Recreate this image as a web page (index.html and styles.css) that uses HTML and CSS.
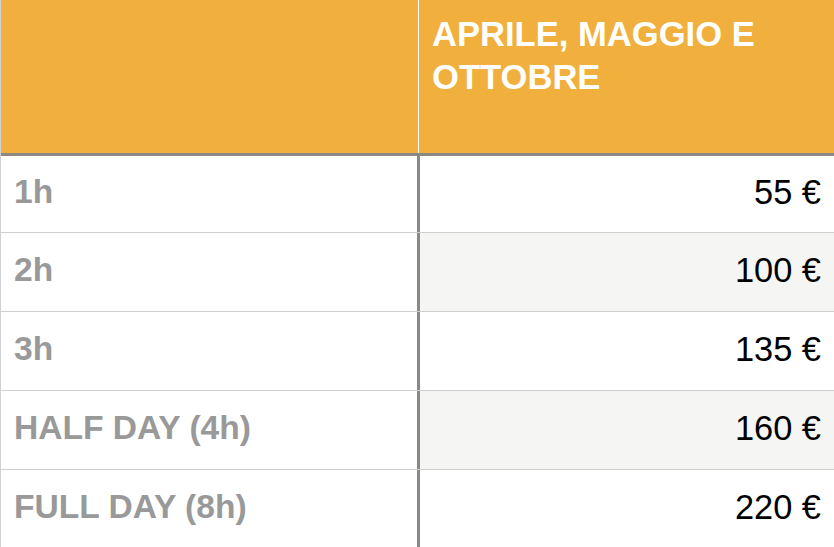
FILE: index.html
```html
<!DOCTYPE html>
<html lang="it">
<head>
<meta charset="utf-8">
<title>Prezzi</title>
<link rel="stylesheet" href="styles.css">
</head>
<body>
<div class="table">
  <div class="head">
    <div class="hcell hcell-left"></div>
    <div class="hcell hcell-right">APRILE, MAGGIO E OTTOBRE</div>
  </div>
  <div class="row row-first">
    <div class="label">1h</div>
    <div class="price">55 €</div>
  </div>
  <div class="row row-alt">
    <div class="label">2h</div>
    <div class="price">100 €</div>
  </div>
  <div class="row">
    <div class="label">3h</div>
    <div class="price">135 €</div>
  </div>
  <div class="row row-alt">
    <div class="label">HALF DAY (4h)</div>
    <div class="price">160 €</div>
  </div>
  <div class="row row-last">
    <div class="label">FULL DAY (8h)</div>
    <div class="price">220 €</div>
  </div>
</div>
</body>
</html>
```
FILE: styles.css
```css
html, body {
  margin: 0;
  padding: 0;
  background: #ffffff;
}

body {
  font-family: "Liberation Sans", Arial, Helvetica, sans-serif;
  width: 834px;
  height: 547px;
  overflow: hidden;
}

.table {
  width: 834px;
  border-left: 1px solid #cfd2d4;
  box-sizing: border-box;
}

.head {
  display: grid;
  grid-template-columns: 417px 1fr;
  height: 153px;
  background: #f1b03e;
  border-bottom: 3px solid #8a8886;
}

.hcell-right {
  border-left: 1px solid #ffffff;
  padding: 13px 10px 0 13px;
  color: #ffffff;
  font-weight: bold;
  font-size: 34.6px;
  line-height: 43px;
}

.row {
  display: grid;
  grid-template-columns: 416px 3px 1fr;
  height: 78px;
  border-bottom: 1px solid #cfcfcf;
}

.row::before {
  content: "";
  grid-column: 2;
  grid-row: 1;
  background: #8a8886;
}

.row-first {
  height: 76px;
}

.row-last {
  border-bottom: none;
}

.label {
  grid-column: 1;
  grid-row: 1;
  display: flex;
  align-items: center;
  padding: 0 0 5px 13px;
  color: #999999;
  font-weight: bold;
  font-size: 33.6px;
  line-height: 40px;
}

.price {
  grid-column: 3;
  grid-row: 1;
  display: flex;
  align-items: center;
  justify-content: flex-end;
  padding: 0 13px 5px 0;
  color: #000000;
  font-size: 34.4px;
  line-height: 40px;
}

.row-alt .price {
  background: #f5f5f3;
}
```
